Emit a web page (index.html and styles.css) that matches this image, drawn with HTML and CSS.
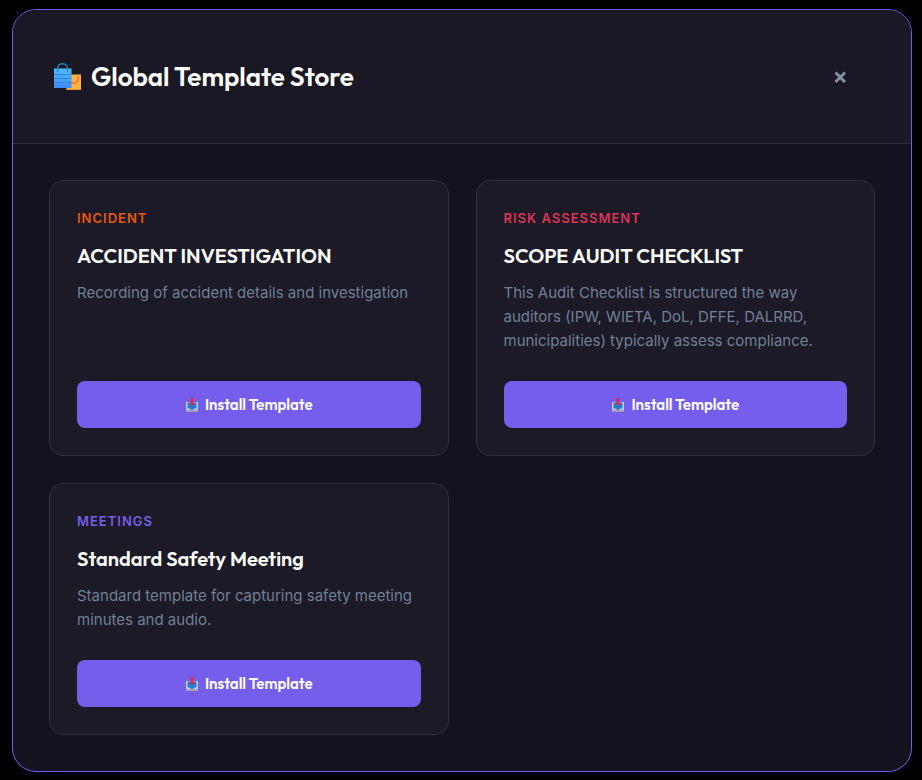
FILE: index.html
```html
<!DOCTYPE html>
<html lang="en">
<head>
<meta charset="utf-8">
<meta name="viewport" content="width=device-width, initial-scale=1">
<title>Global Template Store</title>
<link rel="stylesheet" href="styles.css">
</head>
<body>
<svg class="symbols" aria-hidden="true">
  <symbol id="inbox" viewBox="0 0 14 16">
    <path d="M1 5h12v9.500H1z" fill="#cfc8e6"/>
    <path d="M1 13h12v2H1z" fill="#a79bc4"/>
    <path d="M2.500 5.500h9v6H9l-1 1.500H6l-1-1.500H2.500z" fill="#1f7fd0"/>
    <path d="M5.500 1h3v5h1.500L7 9 4 6h1.500z" fill="#dc2855"/>
  </symbol>
</svg>
<main class="modal" role="dialog" aria-labelledby="store-title">
  <header class="modal-header">
    <h1 class="modal-title" id="store-title">
      <svg class="bags" viewBox="-1 0 28 28" aria-hidden="true">
        <defs><linearGradient id="blue" x1="0" y1="0" x2="0" y2="1"><stop offset="0" stop-color="#50bdf5"/><stop offset="1" stop-color="#418bf8"/></linearGradient></defs>
        <path d="M12.500 11.500H27V27H12.500z" fill="#ffb144"/>
        <path d="M12.500 26H27V27H12.500z" fill="#ed9838"/>
        <path d="M24.200 13.500c.3 5-2 7-7 7" fill="none" stroke="#ef6837" stroke-width="1.300"/>
        <path d="M0 5.500h17.500V25H0z" fill="url(#blue)"/>
        <path d="M0 11.500h17.500M0 15.500h17.500M0 19.500h17.500" stroke="#2f86e4" stroke-width="1"/>
        <path d="M3.500 9V6c0-7 10-7 10 0v3" fill="none" stroke="#2385c5" stroke-width="1.300"/>
      </svg>
      Global Template Store
    </h1>
    <button class="close" type="button" aria-label="Close">
      <svg viewBox="0 0 14 14" aria-hidden="true"><path d="M2.500 2.500l9.500 9.500M12 2.500l-9.500 9.500"/></svg>
    </button>
  </header>
  <div class="templates">
    <article class="card">
      <p class="category incident">INCIDENT</p>
      <h2 class="name">ACCIDENT INVESTIGATION</h2>
      <p class="description">Recording of accident details and investigation</p>
      <button class="install" type="button"><svg aria-hidden="true"><use href="#inbox"/></svg>Install Template</button>
    </article>
    <article class="card">
      <p class="category risk">RISK ASSESSMENT</p>
      <h2 class="name">SCOPE AUDIT CHECKLIST</h2>
      <p class="description">This Audit Checklist is structured the way auditors (IPW, WIETA, DoL, DFFE, DALRRD, municipalities) typically assess compliance.</p>
      <button class="install" type="button"><svg aria-hidden="true"><use href="#inbox"/></svg>Install Template</button>
    </article>
    <article class="card">
      <p class="category meetings">MEETINGS</p>
      <h2 class="name">Standard Safety Meeting</h2>
      <p class="description">Standard template for capturing safety meeting minutes and audio.</p>
      <button class="install" type="button"><svg aria-hidden="true"><use href="#inbox"/></svg>Install Template</button>
    </article>
  </div>
</main>
</body>
</html>
```

FILE: styles.css
```css
* {
  box-sizing: border-box;
}

body {
  margin: 0;
  padding: 9px 10px 8px 12px;
  background: #010103;
  font-family: Inter, "Liberation Sans", sans-serif;
}

h1,
h2,
p {
  margin: 0;
}

.symbols {
  display: none;
}

.modal {
  border: 1px solid #755eeb;
  border-radius: 24px;
  background: #13121e;
  overflow: hidden;
}

.modal-header {
  display: flex;
  align-items: center;
  justify-content: space-between;
  padding: 36px 40px;
  border-bottom: 1px solid #302f3a;
  background: #191824;
}

.modal-title {
  display: flex;
  align-items: center;
  gap: 10px;
  color: #fff;
  font: 600 26px/34px Outfit, Lato, sans-serif;
}

.bags {
  width: 28px;
  height: 28px;
}

.close {
  display: grid;
  place-items: center;
  width: 62px;
  height: 61px;
  padding: 0;
  border: 0;
  background: none;
  cursor: pointer;
}

.close svg {
  width: 14px;
  height: 14px;
  fill: none;
  stroke: #8290a8;
  stroke-width: 3;
}

.templates {
  display: grid;
  grid-template-columns: repeat(auto-fill, minmax(min(320px, 100%), 1fr));
  gap: 27px;
  padding: 36px;
}

.card {
  display: flex;
  flex-direction: column;
  padding: 27px;
  border: 1px solid #302f3a;
  border-radius: 14px;
  background: #1b1a26;
}

.category {
  margin-bottom: 14px;
  font-size: 13px;
  font-weight: 600;
  line-height: 20px;
  letter-spacing: 1px;
}

.incident {
  color: #e8590c;
}

.risk {
  color: #dc3558;
}

.meetings {
  color: #755eeb;
}

.name {
  margin-bottom: 11px;
  color: #fff;
  font: 600 20px/28px Outfit, Lato, sans-serif;
}

.description {
  margin-bottom: 28px;
  color: #718096;
  font-size: 15px;
  line-height: 24px;
}

.install {
  display: flex;
  align-items: center;
  justify-content: center;
  gap: 6px;
  height: 47px;
  margin-top: auto;
  border: 0;
  border-radius: 8px;
  background: #755eeb;
  color: #fff;
  font: 600 15px/20px Outfit, Lato, sans-serif;
  cursor: pointer;
}

.install svg {
  width: 14px;
  height: 16px;
}
```
